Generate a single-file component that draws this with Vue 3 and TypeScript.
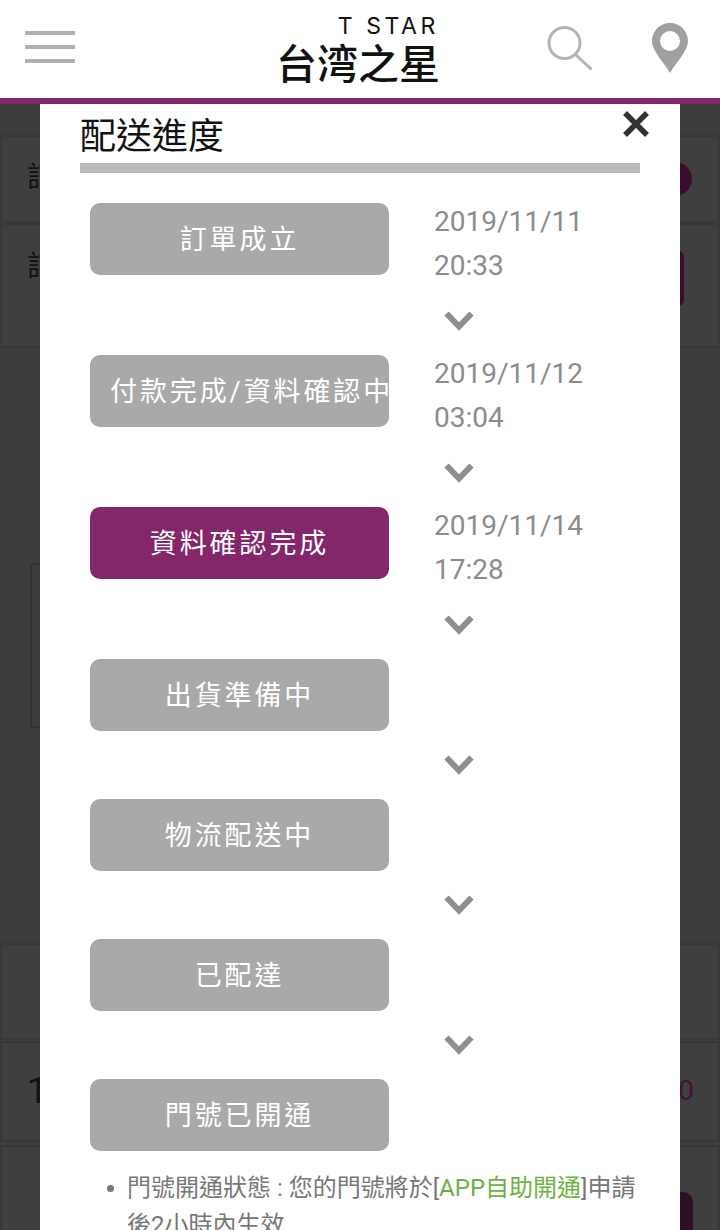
<script setup lang="ts">
interface Step { label: string; date?: string; time?: string; active?: boolean }
const steps: Step[] = [
  { label: '訂單成立', date: '2019/11/11', time: '20:33' },
  { label: '付款完成/資料確認中', date: '2019/11/12', time: '03:04' },
  { label: '資料確認完成', date: '2019/11/14', time: '17:28', active: true },
  { label: '出貨準備中' },
  { label: '物流配送中' },
  { label: '已配達' },
  { label: '門號已開通' },
]
</script>

<template>
  <div class="page">
    <header class="topbar">
      <div class="burger"><i></i><i></i><i></i></div>
      <div class="logo">
        <span class="logo-en">T STAR</span>
        <span class="logo-zh">台湾之星</span>
      </div>
      <svg class="search" width="46" height="46" viewBox="0 0 46 46">
        <circle cx="17.5" cy="18" r="15.5" fill="none" stroke="#b4b4b4" stroke-width="3" />
        <path d="M28.5 29.5 L44.5 44.5" stroke="#b4b4b4" stroke-width="3" fill="none" />
      </svg>
      <svg class="pin" width="36" height="50" viewBox="0 0 36 50">
        <path fill-rule="evenodd" fill="#a0a0a0" d="M18 0C8 0 0 8 0 18c0 10 11 20 18 32 7-12 18-22 18-32C36 8 28 0 18 0Zm0 8a10 10 0 1 1 0 20 10 10 0 0 1 0-20Z" />
      </svg>
    </header>

    <div class="backdrop-content">
      <section class="card c1"><span class="ghost">訂</span><b class="dot"></b></section>
      <section class="card c2"><span class="ghost">訂</span><b class="pill"></b></section>
      <div class="frame"></div>
      <section class="card c3"></section>
      <section class="card c4"><span class="ghost num">1</span><span class="ghost price">0</span></section>
      <section class="card c5"><b class="pill2"></b></section>
    </div>

    <div class="modal">
      <div class="title-row">
        <h2 class="title">配送進度</h2>
        <svg class="close" width="28" height="28" viewBox="0 0 28 28">
          <path d="M3 3 L25 25 M25 3 L3 25" stroke="#333" stroke-width="5.5" fill="none" />
        </svg>
      </div>
      <ul class="steps">
        <li v-for="(s, i) in steps" :key="s.label" class="step">
          <div class="row">
            <div class="btn" :class="{ active: s.active }">{{ s.label }}</div>
            <div v-if="s.date" class="when">{{ s.date }}<br />{{ s.time }}</div>
          </div>
          <div v-if="i < steps.length - 1" class="arrow">
            <svg width="30" height="20" viewBox="0 0 30 20">
              <path d="M2.5 2.5 L15 15.5 L27.5 2.5" fill="none" stroke="#8f8f8f" stroke-width="6" />
            </svg>
          </div>
        </li>
      </ul>
      <ul class="notes">
        <li>門號開通狀態 : 您的門號將於[<a>APP自助開通</a>]申請後2小時內生效</li>
      </ul>
    </div>
  </div>
</template>

<style>
html, body { margin: 0; background: #3d3d3d; }
</style>

<style scoped>
.page {
  position: relative;
  width: 720px;
  height: 1230px;
  overflow: hidden;
  background: #3d3d3d;
  font-family: Roboto, "Noto Sans CJK TC", sans-serif;
}
.topbar {
  position: relative;
  height: 98px;
  background: #fff;
  border-bottom: 6px solid #84266a;
}
.burger {
  position: absolute;
  left: 25px;
  top: 31px;
  width: 50px;
  display: flex;
  flex-direction: column;
  gap: 10px;
}
.burger i { display: block; height: 4px; background: #b0b0b0; }
.logo {
  position: absolute;
  left: 278px;
  top: 13px;
  width: 160px;
  display: flex;
  flex-direction: column;
  align-items: flex-end;
  color: #111;
}
.logo-en {
  font: 400 23px/26px Inter, sans-serif;
  letter-spacing: 3.6px;
  margin-right: -1px;
  white-space: nowrap;
}
.logo-zh {
  font: 500 41px/45px "Noto Sans CJK SC", sans-serif;
  width: 160px;
  margin-right: 2px;
  white-space: nowrap;
}
.search { position: absolute; left: 547px; top: 25px; }
.pin { position: absolute; left: 652px; top: 23px; }

.backdrop-content { position: relative; height: 1126px; }
.card {
  position: absolute;
  left: 2px;
  right: 2px;
  background: #3f3f3f;
  box-shadow: 0 0 0 2px #383838;
}
.c1 { top: 33px; height: 84px; }
.c2 { top: 121px; height: 121px; }
.c3 { top: 841px; height: 93px; }
.c4 { top: 939px; height: 97px; }
.c5 { top: 1043px; height: 90px; }
.ghost { position: absolute; left: 25px; color: #111; font-size: 28px; line-height: 40px; }
.c1 .ghost { top: 21px; }
.c2 .ghost { top: 22px; }
.num { top: 28px; font-size: 36px; }
.price { left: auto; right: 24px; top: 28px; font-size: 28px; color: #45103a; }
.dot { position: absolute; right: 26px; top: 25px; width: 34px; height: 34px; border-radius: 50%; background: #3a0c2e; }
.pill { position: absolute; right: 34px; top: 25px; width: 60px; height: 57px; border-radius: 8px; background: #3a0c2e; }
.pill2 { position: absolute; right: 25px; top: 45px; width: 60px; height: 60px; border-radius: 10px; background: #2e1026; }
.frame {
  position: absolute;
  left: 30px;
  top: 459px;
  width: 80px;
  height: 161px;
  border: 2px solid #333;
}

.modal {
  position: absolute;
  left: 40px;
  top: 104px;
  width: 640px;
  height: 1126px;
  box-sizing: border-box;
  padding: 0 40px;
  background: #fff;
  overflow: hidden;
}
.title-row {
  position: relative;
  height: 59px;
  border-bottom: 10px solid #bbb;
}
.title {
  margin: 0;
  font: 400 36px/59px "Noto Sans CJK TC", sans-serif;
  color: #111;
}
.close { position: absolute; right: -10px; top: 6px; }
.steps { list-style: none; margin: 30px 0 0; padding: 0 0 0 10px; }
.row { display: flex; }
.btn {
  flex: none;
  box-sizing: border-box;
  width: 299px;
  height: 72px;
  padding: 0 20px;
  border-radius: 10px;
  background: #a9a9a9;
  color: #fff;
  font-size: 27px;
  line-height: 74px;
  letter-spacing: 2.9px;
  text-align: center;
  white-space: nowrap;
  overflow: hidden;
}
.btn.active { background: #84266a; }
.when {
  margin: -3px 0 0 45px;
  height: 87px;
  font-size: 28px;
  line-height: 44px;
  color: #8c8c8c;
}
.arrow { height: 68px; box-sizing: border-box; padding: 24px 0 0 354px; }
.arrow svg { display: block; }
.notes {
  list-style: none;
  margin: 19px 0 0;
  padding: 0 0 0 47px;
  font-size: 24px;
  line-height: 37px;
  color: #777;
}
.notes li { position: relative; }
.notes li::before {
  content: "";
  position: absolute;
  left: -20px;
  top: 15px;
  width: 7px;
  height: 7px;
  border-radius: 50%;
  background: #777;
}
.notes a { color: #6cb33f; }
</style>
